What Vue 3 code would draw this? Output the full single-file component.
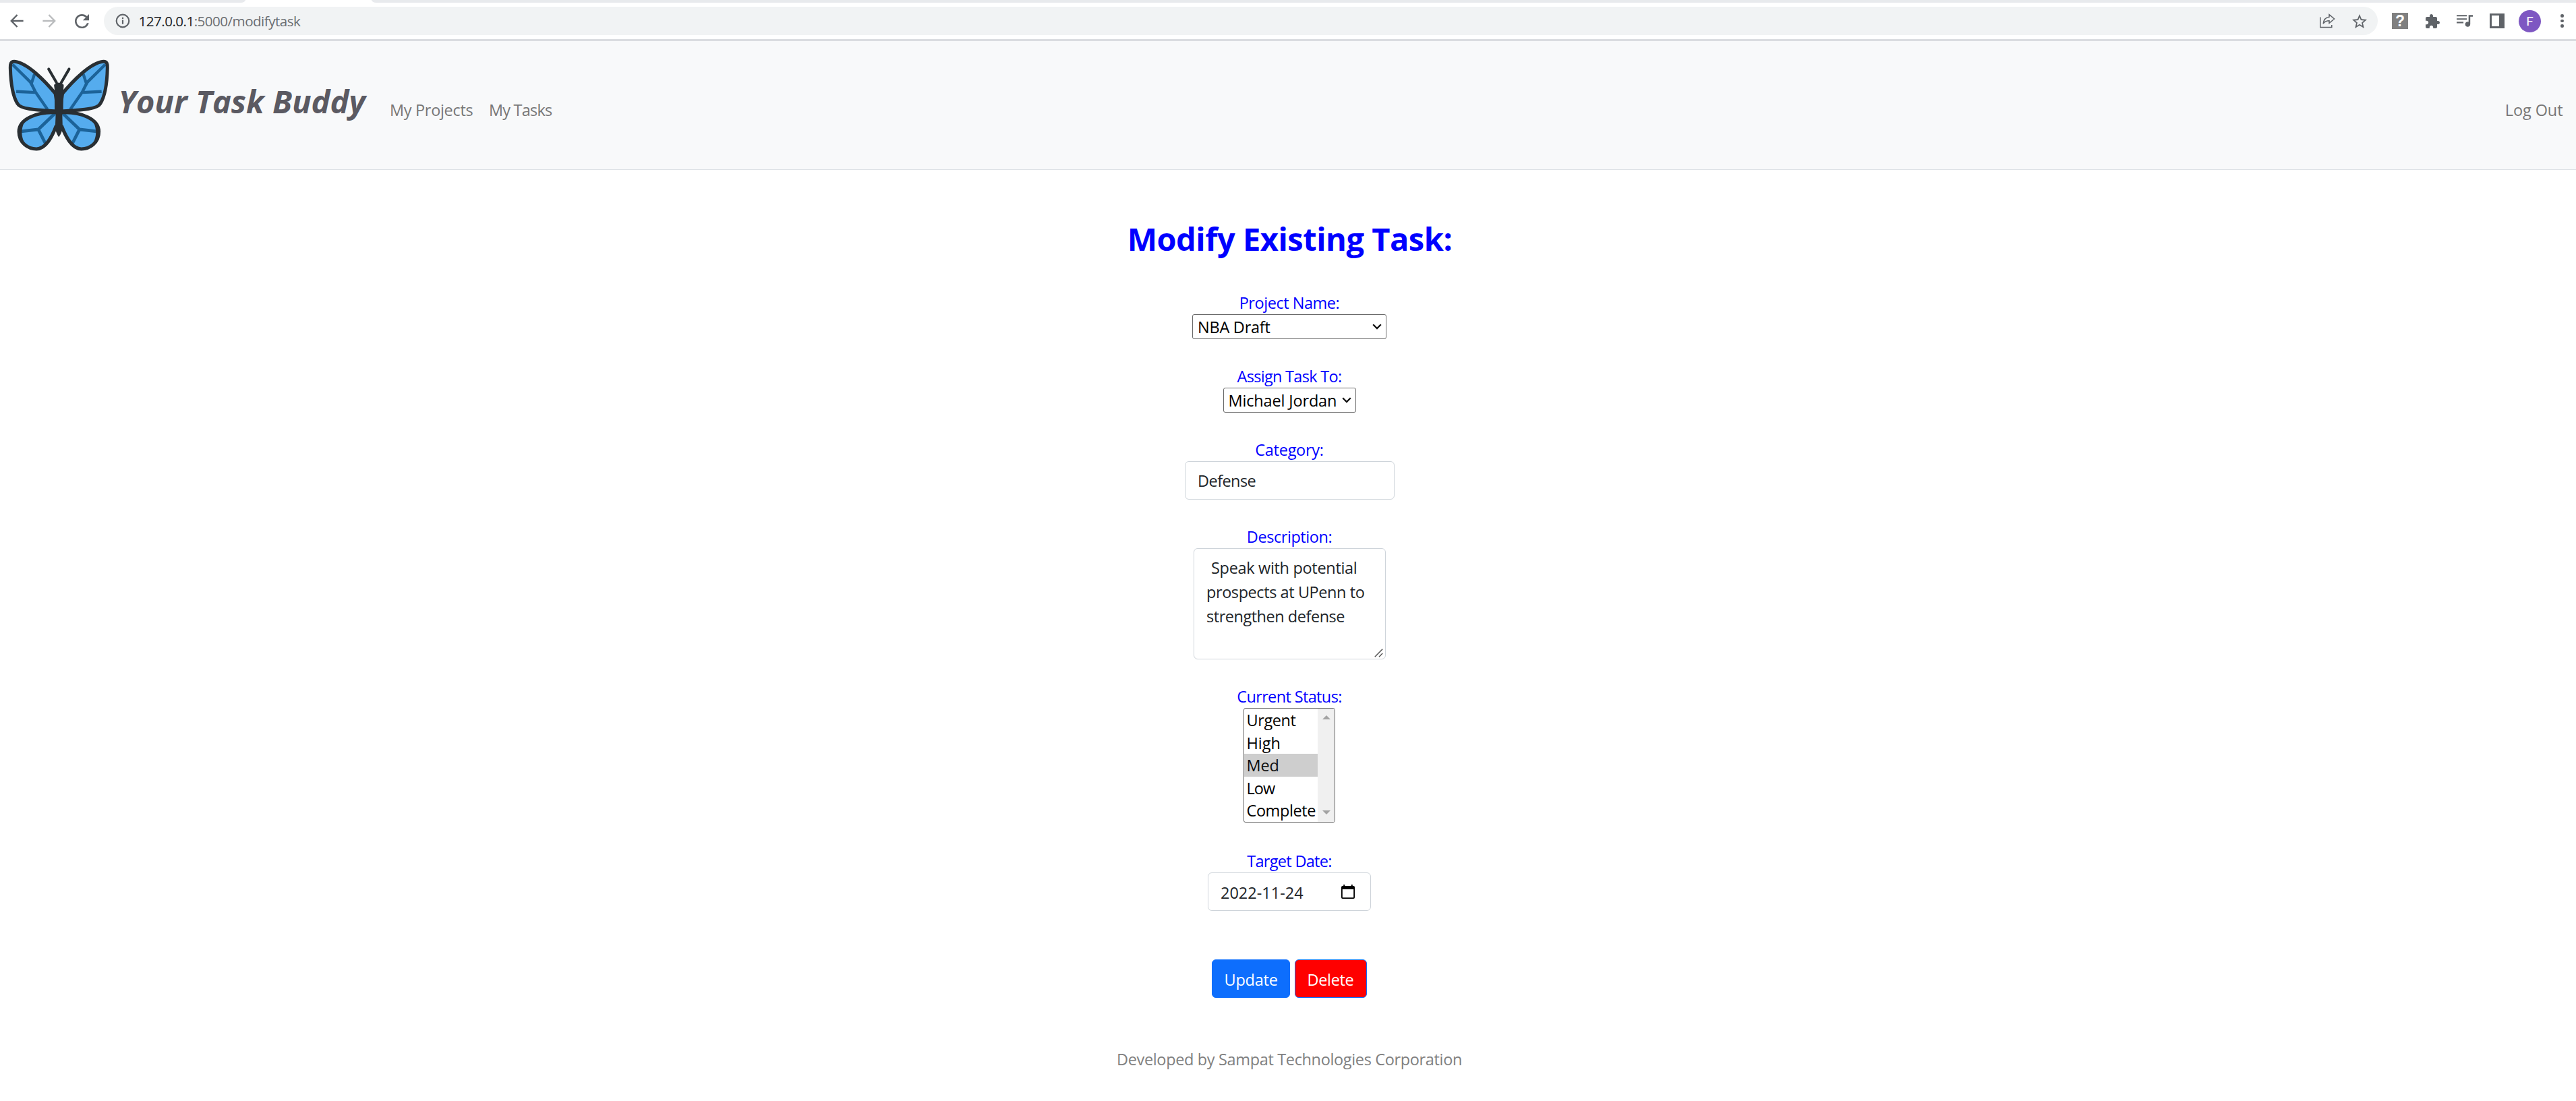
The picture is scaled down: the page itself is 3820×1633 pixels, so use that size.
<script setup>
const statuses = ['Urgent', 'High', 'Med', 'Low', 'Complete']
const selected = 'Med'
// left wings as drawn, right wings mirrored around the body axis
const wings = ['matrix(1 0 0 1 0 0)', 'matrix(-1 0 0 1 523 0)']
</script>

<template>
  <div class="page">
    <div class="tabs">
      <div class="tab-left"></div>
      <div class="tab-right"></div>
    </div>

    <div class="toolbar">
      <svg class="back" viewBox="0 0 20 20" width="20" height="20" fill="none" stroke="#5f6368" stroke-width="2.4"><path d="M19.6 10H2M10.6 1 1.8 10l8.8 9" /></svg>
      <svg class="forward" viewBox="0 0 20 20" width="20" height="20" fill="none" stroke="#babcbe" stroke-width="2.4"><path d="M.4 10H18M9.4 1l8.8 9-8.8 9" /></svg>
      <svg class="reload" viewBox="4 4 16 16" width="21" height="21" fill="#5f6368"><path d="M17.65 6.35C16.2 4.9 14.21 4 12 4c-4.42 0-7.99 3.58-7.99 8s3.57 8 7.99 8c3.73 0 6.84-2.55 7.73-6h-2.08c-.82 2.33-3.04 4-5.65 4-3.31 0-6-2.69-6-6s2.69-6 6-6c1.66 0 3.14.69 4.22 1.78L13 11h7V4l-2.35 2.35z" /></svg>
      <div class="address">
        <svg class="info" viewBox="0 0 22 22" width="22" height="22"><circle cx="11" cy="11" r="9.3" fill="none" stroke="#5f6368" stroke-width="2.2" /><path d="M9.9 9.6h2.2v6.2H9.9zM9.9 5.8h2.2v2.3H9.9z" fill="#5f6368" /></svg>
        <span class="url"><b>127.0.0.1</b>:5000/modifytask</span>
        <svg class="share" viewBox="0 0 23 22" width="23" height="22" fill="none" stroke="#5f6368" stroke-width="1.5"><path d="M.8 5.5v15h17V17M14 1.6 21.6 8 14 14.4V10.8C10 10.8 7.2 12 5.2 15 5.8 9.6 9 5.7 14 5.2z" /></svg>
        <svg class="star" viewBox="2 2 20 19" width="22" height="21" fill="#5f6368"><path d="M22 9.24l-7.19-.62L12 2 9.19 8.63 2 9.24l5.46 4.73L5.82 21 12 17.27 18.18 21l-1.63-7.03L22 9.24zM12 15.4l-3.76 2.27 1-4.28-3.32-2.88 4.38-.38L12 6.1l1.71 4.04 4.38.38-3.32 2.88 1 4.28L12 15.4z" /></svg>
      </div>
      <div class="help">?</div>
      <svg class="puzzle" viewBox="2 1 21 21" width="21" height="21" fill="#5f6368"><path d="M20.5 11H19V7c0-1.1-.9-2-2-2h-4V3.5C13 2.12 11.88 1 10.5 1S8 2.12 8 3.5V5H4c-1.1 0-1.99.9-1.99 2v3.8H3.5c1.49 0 2.7 1.21 2.7 2.7s-1.21 2.7-2.7 2.7H2V20c0 1.1.9 2 2 2h3.8v-1.5c0-1.49 1.21-2.7 2.7-2.7 1.49 0 2.7 1.21 2.7 2.7V22H17c1.1 0 2-.9 2-2v-4h1.5c1.38 0 2.5-1.12 2.5-2.5S21.88 11 20.5 11z" /></svg>
      <svg class="music" viewBox="3 6 19 14" width="24" height="18" fill="#5f6368"><path d="M15 6H3v1.7h12V6zm0 4H3v1.7h12V10zM3 15.7h8V14H3v1.7zM17 6v8.18c-.31-.11-.65-.18-1-.18-1.66 0-3 1.34-3 3s1.34 3 3 3 3-1.34 3-3V8h3V6h-5z" /></svg>
      <div class="side-panel"></div>
      <div class="avatar">F</div>
      <div class="dots"><i></i><i></i><i></i></div>
    </div>

    <nav class="navbar">
      <svg class="logo" viewBox="36 84 452 410" width="151" height="137">
        <g v-for="t in wings" :key="t" :transform="t">
          <path d="M64 94C48 93 45 106 46 122C48 200 58 250 78 281C92 307 170 309 250 314V241C200 180 120 98 64 94z" fill="#55acee" />
          <path d="M56 107 136 186 158 230 211 306M72 227 158 231M153 150 140 190" fill="none" stroke="#1c6399" stroke-width="13" stroke-linejoin="round" />
          <path d="M130 190 147 196 156 222 150 220z" fill="#1c6399" />
          <path d="M250 320C160 316 85 350 85 405C85 455 125 482 162 482C205 482 235 410 252 370z" fill="#55acee" />
          <path d="M244 324 170 395 94 404M170 395 202 458" fill="none" stroke="#1c6399" stroke-width="14" />
          <path d="M64 94C48 93 45 106 46 122C48 200 58 250 78 281C92 307 170 309 250 314V241C200 180 120 98 64 94z" fill="none" stroke="#292f33" stroke-width="15" />
          <path d="M250 320C160 316 84 350 84 405C84 455 125 482 162 482C205 482 232 425 250 378" fill="none" stroke="#292f33" stroke-width="15" />
          <path d="M88 372C76 395 74 420 90 448L108 452C94 425 93 395 108 362z" fill="#292f33" />
          <path d="M216 127 251 187" stroke="#292f33" stroke-width="12" stroke-linecap="round" />
        </g>
        <path d="M240 200Q240 194 250 192Q254 187 261 187Q269 187 273 192Q283 194 283 200L281 228L284 241Q280 270 276 312L278 385Q276 410 261 429Q247 410 245 385L248 312Q244 270 239 241L243 222z" fill="#292f33" />
      </svg>
      <span class="brand">Your Task Buddy</span>
      <a class="link projects">My Projects</a>
      <a class="link tasks">My Tasks</a>
      <a class="link logout">Log Out</a>
    </nav>

    <main class="form">
      <h1>Modify Existing Task:</h1>

      <label class="l-project">Project Name:</label>
      <div class="select project">
        <span>NBA Draft</span>
        <svg viewBox="0 0 14 9" width="14" height="9"><path d="M1.2 1.3 7 7.1l5.8-5.8" /></svg>
      </div>

      <label class="l-assign">Assign Task To:</label>
      <div class="select assignee">
        <span>Michael Jordan</span>
        <svg viewBox="0 0 14 9" width="14" height="9"><path d="M1.2 1.3 7 7.1l5.8-5.8" /></svg>
      </div>

      <label class="l-category">Category:</label>
      <div class="control category">Defense</div>

      <label class="l-description">Description:</label>
      <div class="control description">
        <span class="d1">Speak with potential</span>
        <span class="d2">prospects at UPenn to</span>
        <span class="d3">strengthen defense</span>
        <svg class="grip" viewBox="0 0 13 13" width="13" height="13"><path d="M.8 12.2 12.2.8M7 12.2l5.2-5.2" fill="none" stroke="#555" stroke-width="1.5" /></svg>
      </div>

      <label class="l-status">Current Status:</label>
      <div class="listbox">
        <ul>
          <li v-for="s in statuses" :key="s" :class="[s.toLowerCase(), { selected: s === selected }]">{{ s }}</li>
        </ul>
        <div class="scrollbar">
          <svg viewBox="0 0 12 6" width="12" height="6"><path d="M0 6 6 0l6 6z" fill="#a3a3a3" /></svg>
          <svg viewBox="0 0 12 6" width="12" height="6"><path d="M0 0l6 6 6-6z" fill="#a3a3a3" /></svg>
        </div>
      </div>

      <label class="l-date">Target Date:</label>
      <div class="control date">
        <span>2022-11-24</span>
        <svg viewBox="0 0 20 21" width="20" height="21"><path d="M2 2h1.2V0h2v2h9.600V0h2v2H18q2 0 2 2v15q0 2-2 2H2q-2 0-2-2V4Q0 2 2 2zM1.8 7v12.2h16.4V7z" fill="#000" fill-rule="evenodd" /></svg>
      </div>

      <div class="buttons">
        <button class="update">Update</button>
        <button class="delete">Delete</button>
      </div>

      <footer>Developed by Sampat Technologies Corporation</footer>
    </main>
  </div>
</template>

<style>
body { margin: 0; background: #fff; overflow: hidden; }
</style>

<style scoped>
* { box-sizing: border-box; }
.page { width: 3820px; height: 1633px; overflow: hidden; font: 23.5px/37px "Open Sans", "Noto Sans", sans-serif; color: #212529; background: #fff; white-space: nowrap; }
svg { display: block; flex: none; }

.tabs { display: flex; justify-content: space-between; height: 4px; }
.tab-left { width: 364px; background: #e8eaed; border-bottom-right-radius: 7px 4px; }
.tab-right { width: 3269px; background: #e8eaed; border-bottom-left-radius: 7px 4px; }

.toolbar { display: flex; align-items: center; height: 57px; padding-left: 15px; border-bottom: 3px solid #dadce0; }
.forward { margin-left: 28px; }
.reload { margin-left: 28px; }
.address { display: flex; align-items: center; width: 3372px; height: 42px; margin-left: 22px; padding-left: 17px; border-radius: 21px; background: #f1f3f4; }
.url { margin-left: 12.5px; font-size: 20.6px; letter-spacing: -.522px; color: #6b6e72; line-height: 40px; }
.url b { font-weight: 400; color: #202124; }
.share { margin-left: auto; }
.star { margin-left: 25px; margin-right: 16px; }
.help { width: 24px; height: 24px; margin-left: 21px; background: #808080; color: #fff; font: bold 23px/24px "Liberation Sans", sans-serif; text-align: center; }
.puzzle { margin-left: 26px; }
.music { margin-left: 25px; }
.side-panel { width: 22px; height: 22px; margin-left: 25px; border: 3px solid #5f6368; border-right-width: 8px; }
.avatar { width: 33px; height: 33px; margin-left: 21px; border-radius: 50%; background: #7e57c2; color: #fff; font: 19px/33px Roboto, sans-serif; text-align: center; }
.dots { display: flex; flex-direction: column; gap: 3px; margin-left: 29px; }
.dots i { width: 4.5px; height: 4.5px; border-radius: 50%; background: #5f6368; }

.navbar { display: flex; align-items: flex-start; height: 191px; padding-right: 19.5px; background: #f8f9fa; border-bottom: 1px solid #dee2e6; }
.logo { margin: 27px 0 0 12px; }
.brand { width: 402.4px; margin: 60px 0 0 12.6px; font: italic bold 47px/58px "Open Sans", sans-serif; letter-spacing: 0; color: #5b5a62; }
.link { margin-top: 84px; color: #777; }
.projects { width: 147px; letter-spacing: -.315px; }
.tasks { letter-spacing: -.794px; }
.logout { margin-left: auto; letter-spacing: -.076px; }

.form { display: flex; flex-direction: column; align-items: center; padding: 73px 0 0 4px; }
h1 { margin: 0 0 47px 1px; font: bold 47px/58px "Open Sans", sans-serif; letter-spacing: -.48px; color: #00f; }
label { height: 36px; line-height: 39px; color: #00f; }
.l-project { letter-spacing: -.462px; }
.l-assign { letter-spacing: -.693px; }
.l-category { letter-spacing: -.276px; }
.l-description { letter-spacing: -.434px; }
.l-status { letter-spacing: -.63px; }
.l-date { letter-spacing: -.702px; }

.select { display: flex; justify-content: space-between; height: 37px; margin-bottom: 36px; padding: 0 6px 0 7px; border: 1px solid #6b6b6b; border-radius: 3px; color: #000; line-height: 36px; }
.select svg { margin-top: 13px; fill: none; stroke: #111; stroke-width: 2.3px; }
.project { width: 288px; letter-spacing: -.245px; }
.assignee { width: 197px; letter-spacing: -.155px; }

.control { border: 1px solid #ced4da; border-radius: 6px; height: 57px; margin-bottom: 36px; line-height: 57px; }
.category { width: 311px; padding-left: 18.5px; letter-spacing: -.56px; }
.description { position: relative; display: flex; flex-direction: column; width: 285px; height: 165px; padding: 10px 0 0 18.5px; line-height: 36px; }
.d1 { margin-left: 7px; letter-spacing: -.319px; }
.d2 { letter-spacing: -.422px; }
.d3 { letter-spacing: -.473px; }
.grip { position: absolute; right: 3px; bottom: 2px; }

.listbox { display: flex; width: 136px; height: 170px; margin-bottom: 38px; border: 1px solid #6b6b6b; border-radius: 3px; overflow: hidden; color: #000; }
ul { flex: 1; margin: 0; padding: 0; list-style: none; }
li { height: 33.6px; padding-left: 3.5px; line-height: 34px; }
.selected { background: #cecece; color: #101010; }
.urgent { letter-spacing: -.421px; }
.med { letter-spacing: -.166px; }
.low { letter-spacing: -.952px; }
.complete { letter-spacing: -.411px; }
.scrollbar { display: flex; flex-direction: column; justify-content: space-between; align-items: center; width: 25px; padding: 10px 0 11px; background: #f0f0f0; }

.date { display: flex; justify-content: space-between; width: 242px; margin-bottom: 72px; padding: 0 23px 0 18px; line-height: 58px; }
.date svg { margin-top: 17px; }

.buttons { display: flex; gap: 7px; margin: 0 0 72px 0; }
button { height: 57px; padding: 2px 0 0 17.5px; border: 1px solid #0d6efd; border-radius: 6px; font: 23.5px/55px "Open Sans", sans-serif; color: #fff; text-align: left; }
.update { width: 116px; background: #0d6efd; letter-spacing: -.224px; }
.delete { width: 107px; background: #f00; letter-spacing: -.35px; }
footer { line-height: 39px; color: #808080; letter-spacing: -.348px; }
</style>
